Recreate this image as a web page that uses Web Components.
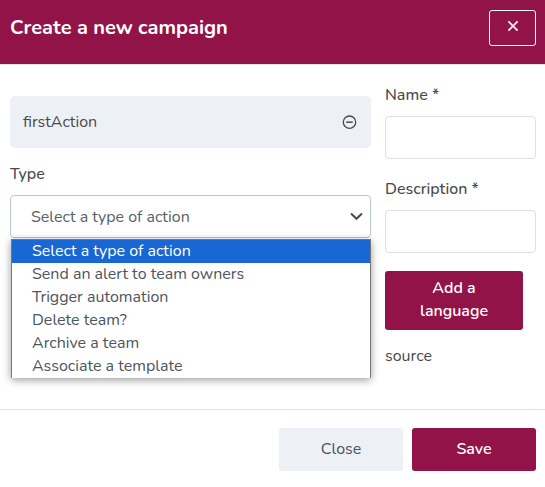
<!DOCTYPE html>
<html lang="en">
<head>
<meta charset="utf-8">
<meta name="viewport" content="width=device-width, initial-scale=1">
<title>Create a new campaign</title>
<style>
  body {
    margin: 0;
    background: #fff;
    color: #4a4a4a;
    font: 16px/24px Nunito, Lato, "Liberation Sans", sans-serif;
    --brand: #911348;
    --muted: #edf1f6;
    --line: #dcdfe4;
  }
</style>
</head>
<body>
<campaign-dialog>
  <span slot="title">Create a new campaign</span>
  <action-item slot="main">firstAction</action-item>
  <action-select slot="main" label="Type"></action-select>
  <text-field slot="side" label="Name *"></text-field>
  <text-field slot="side" label="Description *"></text-field>
  <app-button slot="side" kind="compact">Add a language</app-button>
  <span slot="side">source</span>
  <app-button slot="footer" kind="plain">Close</app-button>
  <app-button slot="footer">Save</app-button>
</campaign-dialog>

<script>
const define = (name, html, setup) => customElements.define(name, class extends HTMLElement {
  connectedCallback() {
    if (this.shadowRoot) return;
    const root = this.attachShadow({ mode: 'open' });
    root.innerHTML = '<style>*{box-sizing:border-box}</style>' + html;
    if (setup) setup(this, root);
  }
});

define('campaign-dialog', `
  <style>
    :host { display: block; }
    header { display: flex; justify-content: space-between; align-items: flex-start; padding: 10px 9px 18px 10px; background: var(--brand); border-bottom: 1px solid var(--line); }
    h1 { margin: 0; padding-top: 4px; color: #fff; font-size: 20px; line-height: 27px; font-weight: 700; }
    .dismiss { display: grid; place-items: center; width: 47px; height: 36px; padding: 0 0 4px; border: 1px solid #fff; border-radius: 3px; background: transparent; color: #f6e6ed; }
    .content { display: grid; grid-template-columns: minmax(0, 361fr) minmax(0, 151fr); gap: 14px; padding: 18px 9px 41px 10px; }
    .main { display: flex; flex-direction: column; gap: 14px; padding-top: 13px; }
    .side { display: flex; flex-direction: column; gap: 18px; }
    ::slotted(span[slot=side]) { margin-top: -4px; }
    footer { display: flex; justify-content: flex-end; gap: 9px; padding: 18px 9px; border-top: 1px solid var(--line); }
    ::slotted([slot=footer]) { flex: 0 1 124px; }
  </style>
  <header>
    <h1><slot name="title"></slot></h1>
    <button class="dismiss" type="button" aria-label="Dismiss">
      <svg width="12" height="12" viewBox="0 0 12 12" fill="none" stroke="currentColor" stroke-width="1.9" aria-hidden="true"><path d="M1.4 1.4l9.2 9.2m0-9.2l-9.2 9.2"/></svg>
    </button>
  </header>
  <div class="content">
    <div class="main"><slot name="main"></slot></div>
    <div class="side"><slot name="side"></slot></div>
  </div>
  <footer><slot name="footer"></slot></footer>`);

define('action-item', `
  <style>
    :host { display: flex; justify-content: space-between; align-items: center; padding: 14px 13px; border-radius: 5px; background: var(--muted); }
    button { display: flex; padding: 0; border: 0; background: none; color: inherit; }
  </style>
  <slot></slot>
  <button type="button" aria-label="Remove action">
    <svg width="17" height="17" viewBox="0 0 17 17" fill="none" stroke="currentColor" stroke-width="1.3" aria-hidden="true"><circle cx="8.5" cy="8.2" r="6.2"/><path d="M5.2 8.2h6.6" stroke-width="1.5"/></svg>
  </button>`);

define('text-field', `
  <style>
    :host { display: block; }
    label { display: block; margin-bottom: 9px; font-weight: 500; }
    input { display: block; width: 100%; height: 43px; padding: 0 12px; border: 1px solid var(--line); border-radius: 4px; background: #fff; color: inherit; font: inherit; }
  </style>
  <label for="field"></label>
  <input id="field" type="text">`,
  (host, root) => root.querySelector('label').textContent = host.getAttribute('label'));

define('action-select', `
  <style>
    :host { display: block; }
    label { display: block; margin-bottom: 9px; font-weight: 500; }
    .control { position: relative; }
    select { appearance: none; display: block; width: 100%; height: 43px; padding: 0 32px 0 20px; border: 1px solid #b9c5cf; border-radius: 4px; background: #fff; color: #596067; font: inherit; }
    svg { position: absolute; right: 8px; top: 17px; pointer-events: none; color: #414b57; }
    ul { position: absolute; top: calc(100% + 1px); left: 1px; right: 0; margin: 0; padding: 0; list-style: none; background: #fff; color: #4d555e; border: 1px solid #777; border-bottom: 0; box-shadow: 0 2px 8px rgba(0,0,0,.4); }
    li { padding: 0 20px; line-height: 23px; }
  li[aria-selected=true] { background: #1967d2; color: #fff; }
  </style>
  <label for="type"></label>
  <div class="control">
    <select id="type"></select>
    <svg width="13" height="9" viewBox="0 0 13 9" fill="none" stroke="currentColor" stroke-width="2" aria-hidden="true"><path d="M1 1.6l5.5 5.2 5.5-5.2"/></svg>
    <ul role="listbox" aria-label="Type"></ul>
  </div>`,
  (host, root) => {
    root.querySelector('label').textContent = host.getAttribute('label');
    const choices = ['Select a type of action', 'Send an alert to team owners', 'Trigger automation', 'Delete team?', 'Archive a team', 'Associate a template'];
    const select = root.querySelector('select');
    const list = root.querySelector('ul');
    choices.forEach((text, i) => {
      select.add(new Option(text));
      const item = document.createElement('li');
      item.setAttribute('role', 'option');
      item.setAttribute('aria-selected', i === 0);
      item.textContent = text;
      item.addEventListener('click', () => {
        select.selectedIndex = i;
        [...list.children].forEach(li => li.setAttribute('aria-selected', li === item));
      });
      list.append(item);
    });
  });

define('app-button', `
  <style>
    :host { display: block; }
    button { width: 100%; min-height: 43px; padding: 5px 16px 7px; border: 0; border-radius: 3px; background: var(--brand); color: #fff; font: inherit; font-weight: 600; }
    :host([kind=plain]) button { background: var(--muted); color: #4a535d; font-weight: 400; }
    :host([kind=compact]) { margin-right: 13px; }
    :host([kind=compact]) button { padding: 5px 32px 7px; line-height: 23px; min-height: 59px; }
  </style>
  <button type="button"><slot></slot></button>`);
</script>
</body>
</html>
